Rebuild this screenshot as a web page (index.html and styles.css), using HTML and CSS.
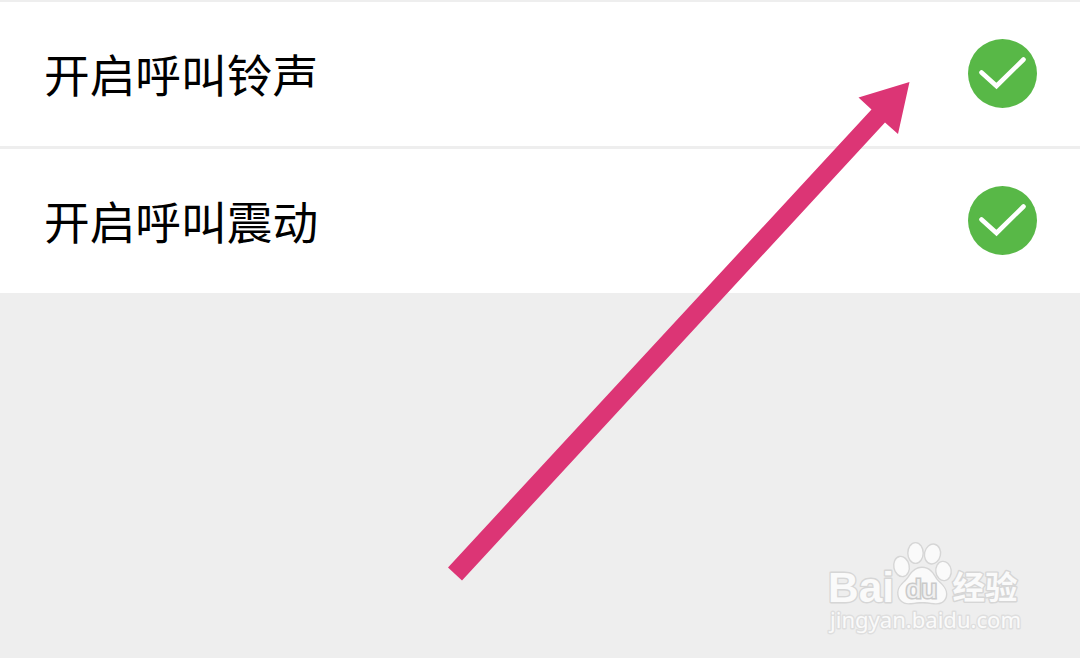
FILE: index.html
```html
<!DOCTYPE html>
<html lang="zh-CN">
<head>
    <meta charset="UTF-8">
    <title>呼叫设置</title>
    <meta name="viewport" content="width=device-width, initial-scale=1.0">
    <link rel="stylesheet" href="styles.css">
</head>
<body>
    <div class="settings">
        <div class="setting-row">
            <span class="setting-label">开启呼叫铃声</span>
            <svg class="check" viewBox="0 0 69 69">
                <circle cx="34.5" cy="34.5" r="34.5"/>
                <path d="M13.5 33.5L28.5 47L55.5 20.5"/>
            </svg>
        </div>
        <div class="setting-row">
            <span class="setting-label">开启呼叫震动</span>
            <svg class="check" viewBox="0 0 69 69">
                <circle cx="34.5" cy="34.5" r="34.5"/>
                <path d="M13.5 33.5L28.5 47L55.5 20.5"/>
            </svg>
        </div>
    </div>

    <!-- Pointer arrow over the list -->
    <svg class="arrow" viewBox="0 0 1080 658">
        <polygon points="909.5,82 858.5,97.5 871.5,109.5 448,567.5 462,580.5 885,122.5 898,134"/>
    </svg>

    <!-- Watermark -->
    <svg class="watermark" viewBox="0 0 230 120">
        <g class="mark">
            <text class="mark-brand" x="18" y="72" textLength="66" lengthAdjust="spacingAndGlyphs">Bai</text>
            <ellipse cx="91.5" cy="36.5" rx="7" ry="9.5" transform="rotate(-12 91.5 36.5)"/>
            <ellipse cx="105.5" cy="23" rx="7" ry="9.7"/>
            <ellipse cx="122.5" cy="24" rx="7.3" ry="9.3" transform="rotate(12 122.5 24)"/>
            <ellipse cx="133.5" cy="41" rx="7" ry="9" transform="rotate(-8 133.5 41)"/>
            <path d="M112 38C120 38 123 44 126 49C130 54 136 57 136 64C136 71 130 74 124 73C115 71.5 109 71.5 101 73C94 74 88 70 88.5 62C89 55 95 53 99 47C102 42 106 38 112 38Z"/>
            <text class="mark-cn" x="142.5" y="68.5" textLength="65" lengthAdjust="spacingAndGlyphs">经验</text>
            <text class="mark-url" x="20" y="97.5" textLength="191" lengthAdjust="spacingAndGlyphs">jingyan.baidu.com</text>
        </g>
        <text class="mark-du" x="96" y="67.5" textLength="31" lengthAdjust="spacingAndGlyphs">du</text>
    </svg>
</body>
</html>
```
FILE: styles.css
```css
body {
    font-family: "Noto Sans CJK SC", sans-serif;
    background-color: #eeeeee;
    margin: 0;
    overflow: hidden;
}
.settings {
    display: flex;
    flex-direction: column;
    gap: 3px;
    padding-top: 2px;
}
.setting-row {
    display: flex;
    justify-content: space-between;
    align-items: center;
    box-sizing: border-box;
    height: 144px;
    padding: 0 43px 2px 44px;
    background-color: #fff;
}
.setting-label {
    font-size: 45.7px;
    line-height: 68px;
    color: #000;
}
.check {
    width: 69px;
    height: 69px;
}
.check circle {
    fill: #58b847;
}
.check path {
    fill: none;
    stroke: #fff;
    stroke-width: 4.6;
    stroke-linecap: round;
}
.arrow {
    position: absolute;
    top: 0;
    left: 0;
    width: 1080px;
    height: 658px;
    fill: #dc3575;
}
.watermark {
    position: absolute;
    top: 530px;
    left: 810px;
    width: 230px;
    height: 120px;
}
.mark {
    fill: #fafafa;
    stroke: #d6d6d6;
    stroke-width: 2.8;
    stroke-linejoin: round;
    paint-order: stroke;
}
.mark-brand {
    font: bold 43px/1 "Liberation Sans", sans-serif;
}
.mark-cn {
    font: bold 32px/1 "Noto Sans CJK SC", sans-serif;
}
.mark-url {
    font: 22px/1 "Noto Sans", sans-serif;
    stroke: #dedede;
}
.mark-du {
    font: 25px/1 "Liberation Sans", sans-serif;
    fill: #f0f0f0;
    stroke: #cacaca;
    stroke-width: 3;
    paint-order: stroke;
}
```
